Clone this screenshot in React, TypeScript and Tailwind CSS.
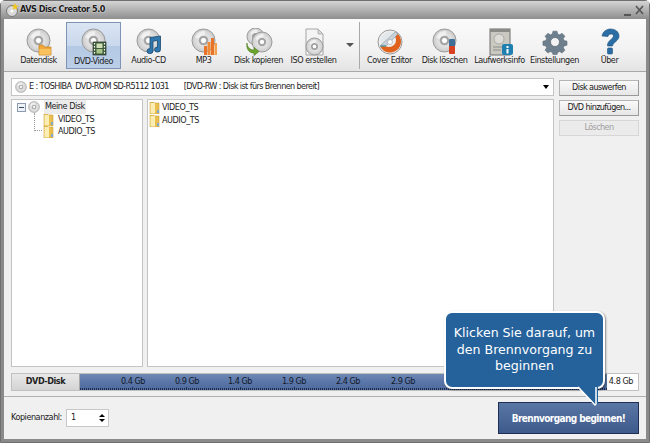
import type { ReactNode } from "react";

const font = { fontFamily: '"DejaVu Sans Condensed", "DejaVu Sans", sans-serif', fontStretch: "condensed" as const };

function Disc({ x = 2, y = 1, r = 11.5 }: { x?: number; y?: number; r?: number }) {
  const cx = x + r;
  const cy = y + r;
  return (
    <g>
      <circle cx={cx} cy={cy} r={r} fill="url(#discFill)" stroke="#9a9a9a" strokeWidth="1" />
      <path d={`M${cx - r + 3} ${cy - 3}A${r - 2} ${r - 2} 0 0 1 ${cx + 2} ${cy - r + 2}L${cx} ${cy}Z`} fill="#fff" opacity=".55" />
      <circle cx={cx} cy={cy} r={r * 0.42} fill="#a8a8a8" />
      <circle cx={cx} cy={cy} r={r * 0.27} fill="#fff" stroke="#7a7a7a" strokeWidth=".6" />
    </g>
  );
}

function IconSvg({ children }: { children: ReactNode }) {
  return (
    <svg width="28" height="28" viewBox="0 0 28 28" className="block">
      {children}
    </svg>
  );
}

const icons: Record<string, ReactNode> = {
  data: (
    <IconSvg>
      <Disc />
      <path d="M14 17h4l1.500 2H26v8H14z" fill="#f2a93b" stroke="#c47f1a" strokeWidth=".7" />
      <rect x="14.400" y="21" width="11.200" height="5.600" fill="#f9c25e" />
    </IconSvg>
  ),
  dvd: (
    <IconSvg>
      <Disc />
      <rect x="13" y="14" width="13" height="13" fill="#3f5a38" stroke="#2a3a28" strokeWidth=".7" />
      <rect x="16.500" y="15.500" width="6" height="4.500" fill="#cfe0b8" />
      <rect x="16.500" y="21" width="6" height="4.500" fill="#a8c58c" />
      <path d="M14.500 15v1.500M14.500 18v1.500M14.500 21v1.500M14.500 24v1.500M24.500 15v1.500M24.500 18v1.500M24.500 21v1.500M24.500 24v1.500" stroke="#fff" strokeWidth="1.200" />
    </IconSvg>
  ),
  audio: (
    <IconSvg>
      <Disc />
      <path d="M15 9.500l10.500-1.500v13.500a3 2.500 0 1 1-3-2.400V12.500l-4.500.7v9.800a3 2.500 0 1 1-3-2.400z" fill="#2f77ad" stroke="#1b4a72" strokeWidth=".8" />
    </IconSvg>
  ),
  mp3: (
    <IconSvg>
      <Disc />
      <rect x="14" y="18" width="3" height="9" fill="#e8742a" />
      <rect x="17.500" y="14" width="3" height="13" fill="#f08a35" />
      <rect x="21" y="10" width="3" height="17" fill="#e8742a" />
      <rect x="24.500" y="15" width="2.500" height="12" fill="#f3a04d" />
    </IconSvg>
  ),
  copy: (
    <IconSvg>
      <Disc x={2} y={0} r={8.500} />
      <Disc x={7} y={4} r={10} />
      <path d="M2 15c0 4 3 7 7 7v-2.500l5 4-5 4V25c-5 0-8-4-7-10z" fill="#6fa52e" stroke="#47751a" strokeWidth=".6" />
    </IconSvg>
  ),
  iso: (
    <IconSvg>
      <path d="M6 1h12l5 5v21H6z" fill="#f4f4f4" stroke="#a5a5a5" />
      <path d="M18 1v5h5z" fill="#d8d8d8" stroke="#a5a5a5" strokeWidth=".7" />
      <Disc x={6} y={10} r={8.500} />
    </IconSvg>
  ),
  cover: (
    <IconSvg>
      <circle cx="14" cy="14" r="12" fill="#eeeeee" stroke="#9a9a9a" />
      <path d="M21 5a11 11 0 1 1-17 13l4-1a7 7 0 1 0 10-10z" fill="#e0621c" />
      <path d="M5 17L19 4l3 2-12 12z" fill="#c9d2da" stroke="#8796a3" strokeWidth=".6" />
      <path d="M5 16a9 9 0 0 1 12-11z" fill="#dfe5ea" opacity=".9" />
      <path d="M4 18l6 0" stroke="#3f9fb5" strokeWidth="1.200" />
      <circle cx="14" cy="14" r="2.500" fill="#fff" stroke="#9a9a9a" strokeWidth=".6" />
    </IconSvg>
  ),
  erase: (
    <IconSvg>
      <Disc />
      <rect x="18" y="11" width="6" height="8" rx="1" fill="#3d6f99" />
      <rect x="18" y="18" width="6" height="8" rx="1" fill="#d8401f" />
    </IconSvg>
  ),
  info: (
    <IconSvg>
      <rect x="4" y="1" width="20" height="26" fill="#c9c9c2" stroke="#6f6f6f" />
      <rect x="4" y="1" width="20" height="3" fill="#8a8a86" />
      <circle cx="13" cy="11" r="5" fill="#dedcd6" stroke="#9a9a94" strokeWidth=".7" />
      <path d="M7 19h10M7 22h8" stroke="#8e8e88" strokeWidth="1" />
      <rect x="16" y="16" width="11" height="11" rx="2" fill="#1f7fb0" />
      <rect x="20.500" y="18" width="2" height="2" fill="#fff" />
      <rect x="20.500" y="21" width="2" height="4.500" fill="#fff" />
    </IconSvg>
  ),
  gear: (
    <IconSvg>
      <path
        d="M11.500 2h5l.8 3.500 2.300 1 3-1.900 3.500 3.500-1.900 3 1 2.300 3.500.8v5l-3.500.8-1 2.300 1.900 3-3.500 3.500-3-1.900-2.300 1-.8 2.600h-5l-.8-2.600-2.300-1-3 1.900-3.500-3.500 1.900-3-1-2.300-3.500-.8v-5l3.500-.8 1-2.300-1.900-3 3.500-3.500 3 1.900 2.300-1z"
        transform="translate(2.500 1.500) scale(.82)"
        fill="#6e7f8d"
        stroke="#55636f"
        strokeWidth=".6"
      />
      <circle cx="14" cy="14" r="4.500" fill="#f3f3f3" stroke="#55636f" strokeWidth=".7" />
    </IconSvg>
  ),
  help: (
    <IconSvg>
      <path
        d="M6 8c1-5 5-7 8.500-7C19.500 1 23 4 23 8c0 5-6 6-6.500 10h-5c-.5-5.500 6-7 6-10 0-2.500-4.500-3-5.500.5z"
        fill="#2a6ea5"
        stroke="#1d4f78"
        strokeWidth=".6"
      />
      <rect x="11.500" y="20" width="5" height="6" rx="1" fill="#2a6ea5" stroke="#1d4f78" strokeWidth=".6" />
    </IconSvg>
  ),
};

function ToolButton({ icon, label, active }: { icon: string; label: string; active?: boolean }) {
  return (
    <div
      className={`w-[55px] h-[47px] shrink-0 flex flex-col items-center pt-[5px] ${
        active ? "border border-[#7d94b6] bg-[linear-gradient(#dbe5f3,#c9d8ec_50%,#b4c9e4_52%,#bccfe8)]" : "border border-transparent"
      }`}
    >
      {icons[icon]}
      <span className={`text-[9px] leading-[11px] whitespace-nowrap text-[#222] ${active ? "mt-0" : "mt-[-1px]"}`}>{label}</span>
    </div>
  );
}

function SideButton({ label, disabled }: { label: string; disabled?: boolean }) {
  return (
    <div
      className={`h-[16px] w-[80px] flex items-center justify-center text-[9px] tracking-[-0.6px] whitespace-nowrap border ${
        disabled
          ? "border-[#d6d6d6] bg-[#ebebeb] text-[#a0a0a0]"
          : "border-[#b5b5b5] border-b-[#9a9a9a] border-r-[#9a9a9a] bg-[linear-gradient(#fafafa,#e6e6e6)] text-[#222]"
      }`}
    >
      {label}
    </div>
  );
}

function Folder() {
  return (
    <svg width="11" height="12" viewBox="0 0 11 12" className="shrink-0">
      <path d="M1 0h3.500l1 1H10v11H1z" fill="#e9bf4f" stroke="#c9a03c" strokeWidth=".6" />
      <rect x="1.500" y="1" width="4.500" height="10.500" fill="#fbeeb4" />
      <rect x="8" y="8" width="2" height="3" fill="#7fa8c9" />
    </svg>
  );
}

function SmallDisc({ size = 12 }: { size?: number }) {
  return (
    <svg width={size} height={size} viewBox="0 0 24 24" className="shrink-0">
      <Disc x={1} y={1} r={11} />
    </svg>
  );
}

const marks = [
  ["0.4 Gb", 38],
  ["0.9 Gb", 24],
  ["1.4 Gb", 23],
  ["1.9 Gb", 24],
  ["2.4 Gb", 24],
  ["2.9 Gb", 25],
] as const;

function Ruler() {
  return (
    <svg width="560" height="3" className="absolute left-0 bottom-0">
      {Array.from({ length: 280 }, (_, i) => (
        <rect key={i} x={i * 2} y={i % 27 === 26 ? 0 : 1} width="1" height={i % 27 === 26 ? 3 : 2} fill="#1d2c4c" />
      ))}
    </svg>
  );
}

export default function App() {
  return (
    <div className="relative w-[650px] h-[443px] overflow-hidden bg-white text-[#222] tracking-[-0.45px]" style={font}>
      <svg width="0" height="0" className="absolute">
        <defs>
          <radialGradient id="discFill" cx="50%" cy="50%" r="55%">
            <stop offset="0%" stopColor="#f2f2f2" />
            <stop offset="60%" stopColor="#dcdcdc" />
            <stop offset="100%" stopColor="#c4c4c4" />
          </radialGradient>
        </defs>
      </svg>
      <div className="w-full h-full flex flex-col rounded-t-[5px] bg-[#8a8a8a] border border-[#6f6f6f]">
        <div className="h-[18px] shrink-0 flex items-center pl-[4px] pr-[5px] bg-[linear-gradient(#d4d4d4,#b8b8b8_40%,#8e8e8e)]">
          <svg width="14" height="14" viewBox="0 0 14 14" className="shrink-0">
            <circle cx="7" cy="8" r="5.500" fill="#d9d9d9" stroke="#777" />
            <circle cx="7" cy="8" r="1.500" fill="#fff" />
            <path d="M10 0l1 2.500 2.500.2-2 1.600.7 2.500L10 5.500 7.800 6.800l.7-2.500-2-1.600L9 2.500z" fill="#f5c518" />
          </svg>
          <span className="ml-[1px] text-[9px] font-bold text-[#1a1a1a] [text-shadow:0_0_2px_#fff]">AVS Disc Creator 5.0</span>
          <svg width="20" height="11" viewBox="0 0 20 11" className="ml-auto">
            <rect x="0" y="9" width="7" height="2" fill="#555" />
            <path d="M12 1l7 8M19 1l-7 8" stroke="#555" strokeWidth="1.600" />
          </svg>
        </div>

        <div className="flex-1 min-h-0 mx-[3px] mb-[3px] flex flex-col bg-[#f0f0f0]">
          <div className="h-[53px] shrink-0 flex items-center pl-[7px] border-b border-[#a8a8a8] bg-[linear-gradient(#fbfbfb,#f2f2f2_60%,#e4e4e4)]">
            <ToolButton icon="data" label="Datendisk" />
            <ToolButton icon="dvd" label="DVD-Video" active />
            <ToolButton icon="audio" label="Audio-CD" />
            <ToolButton icon="mp3" label="MP3" />
            <ToolButton icon="copy" label="Disk kopieren" />
            <ToolButton icon="iso" label="ISO erstellen" />
            <div className="w-[18px] shrink-0 flex justify-center">
              <div className="w-0 h-0 border-x-[4px] border-x-transparent border-t-[4px] border-t-[#555]" />
            </div>
            <div className="w-px h-[47px] shrink-0 bg-[#a9a9a9] mr-[2px]" />
            <ToolButton icon="cover" label="Cover Editor" />
            <ToolButton icon="erase" label="Disk löschen" />
            <ToolButton icon="info" label="Laufwerksinfo" />
            <ToolButton icon="gear" label="Einstellungen" />
            <ToolButton icon="help" label="Über" />
          </div>

          <div className="flex-1 min-h-0 flex flex-col pl-[7px] pr-[7px] pt-[6px]">
            <div className="flex-1 min-h-0 flex gap-[3px]">
              <div className="w-[545px] flex flex-col gap-[3px]">
                <div className="h-[18px] shrink-0 flex items-center pl-[3px] pr-[4px] bg-white border border-[#c4c4c4] text-[9px] tracking-[-0.6px]">
                  <SmallDisc />
                  <span className="ml-[2px] whitespace-pre">E : TOSHIBA  DVD-ROM SD-R5112 1031</span>
                  <span className="ml-[15px] whitespace-pre">[DVD-RW : Disk ist fürs Brennen bereit]</span>
                  <div className="ml-auto w-0 h-0 border-x-[3px] border-x-transparent border-t-[4px] border-t-black" />
                </div>
                <div className="flex-1 min-h-0 flex gap-[4px]">
                  <div className="relative w-[132px] bg-white border border-[#c4c4c4] pl-[5px] pt-[1px] text-[9px]">
                    <div className="flex items-center h-[12px]">
                      <div className="w-[9px] h-[9px] border border-[#8a9ab0] bg-[#eef1f5] flex items-center justify-center shrink-0">
                        <div className="w-[5px] h-px bg-[#3a4a60]" />
                      </div>
                      <div className="ml-[2px]">
                        <SmallDisc />
                      </div>
                      <span className="ml-[4px] bg-[#ececec] px-px">Meine Disk</span>
                    </div>
                    <div className="flex">
                      <div className="w-[8px] ml-[17px] h-[18px] border-l border-b border-dotted border-[#999] shrink-0" />
                    </div>
                    <div className="absolute left-[31px] top-[14px] flex items-center h-[12px]">
                      <Folder />
                      <span className="ml-[4px]">VIDEO_TS</span>
                    </div>
                    <div className="absolute left-[31px] top-[26px] flex items-center h-[12px]">
                      <Folder />
                      <span className="ml-[4px]">AUDIO_TS</span>
                    </div>
                  </div>
                  <div className="flex-1 bg-white border border-[#c4c4c4] pl-[1px] text-[9px]">
                    <div className="flex items-center gap-[2px] h-[13px] mt-[1px]">
                      <Folder />
                      <span>VIDEO_TS</span>
                    </div>
                    <div className="flex items-center gap-[2px] h-[13px]">
                      <Folder />
                      <span>AUDIO_TS</span>
                    </div>
                  </div>
                </div>
              </div>
              <div className="flex flex-col gap-[4px] pt-[2px] ml-[2px]">
                <SideButton label="Disk auswerfen" />
                <SideButton label="DVD hinzufügen..." />
                <SideButton label="Löschen" disabled />
              </div>
            </div>

            <div className="h-[18px] shrink-0 mt-[6px] flex border border-[#c0c0c0]">
              <div className="w-[68px] shrink-0 flex items-center justify-center text-[9px] font-bold bg-[linear-gradient(#e8e8e8,#d4d4d4)] border-r border-[#a8a8a8]">
                DVD-Disk
              </div>
              <div className="relative w-[527px] shrink-0 overflow-hidden flex items-center text-[9px] text-[#101828] bg-[linear-gradient(#6f88b4,#5a76a8_50%,#4f6b9e)]">
                {marks.map(([label, gap]) => (
                  <span key={label} className="whitespace-nowrap w-[30px] text-center" style={{ marginLeft: gap }}>
                    {label}
                  </span>
                ))}
                <Ruler />
              </div>
              <div className="relative flex-1 bg-white text-[9px] whitespace-nowrap flex items-center justify-end pr-[5px]">
                4.8 Gb
              </div>
            </div>
          </div>

          <div className="h-[43px] shrink-0 mt-[5px] flex items-center pl-[7px] pr-[7px] border-t border-[#b0b0b0]">
            <span className="text-[9px]">Kopienanzahl:</span>
            <div className="ml-[4px] w-[43px] h-[18px] flex items-center justify-between pl-[4px] pr-[3px] bg-white border border-[#c8c8c8] text-[9px]">
              <span>1</span>
              <div className="flex flex-col gap-[2px]">
                <div className="w-0 h-0 border-x-[3.500px] border-x-transparent border-b-[3px] border-b-black" />
                <div className="w-0 h-0 border-x-[3.500px] border-x-transparent border-t-[3px] border-t-black" />
              </div>
            </div>
            <div className="ml-auto w-[141px] h-[32px] flex items-center justify-center text-[10px] tracking-[-0.6px] font-bold whitespace-nowrap text-white border border-[#1f2e52] bg-[linear-gradient(#5a76a4,#3e5a8c)]">
              Brennvorgang beginnen!
            </div>
          </div>
        </div>
      </div>

      <div className="absolute left-[444px] top-[311px] w-[161px] h-[78px] rounded-[8px] bg-[#25629c] border-2 border-white shadow-[1px_1px_2px_rgba(0,0,0,.45)] flex items-center justify-center text-center text-[12.600px] leading-[16.500px] tracking-normal whitespace-nowrap text-white" style={{ fontFamily: '"DejaVu Sans", sans-serif', fontStretch: "normal" }}>
        Klicken Sie darauf, um
        <br />
        den Brennvorgang zu
        <br />
        beginnen
      </div>
      <svg width="24" height="22" viewBox="0 0 24 22" className="absolute left-[577px] top-[385px]">
        <path d="M1 1l17 19 3-1V1z" fill="#25629c" />
        <path d="M1 2l17 18 1-1V2" fill="none" stroke="#fff" strokeWidth="1.500" />
      </svg>
    </div>
  );
}
